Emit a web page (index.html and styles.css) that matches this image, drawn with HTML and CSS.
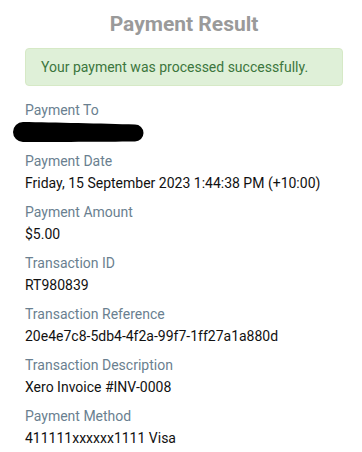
FILE: index.html
```html
<!DOCTYPE html>
<html>
<head>
<meta charset="utf-8">
<link rel="stylesheet" href="styles.css">
</head>
<body>
<div class="page">
  <h1 class="title">Payment Result</h1>
  <div class="alert">Your payment was processed successfully.</div>
  <dl class="details">
    <dt>Payment To</dt>
    <dd><svg class="redacted" width="131" height="20" viewBox="0 0 131 20"><path d="M10 0 C40 0.5 90 1.5 122 2.5 A8.5 8.5 0 0 1 122 19.5 C90 19.8 40 20 10 20 A10 10 0 0 1 10 0 Z" fill="#000"/></svg></dd>
    <dt>Payment Date</dt>
    <dd>Friday, 15 September 2023 1:44:38 PM (+10:00)</dd>
    <dt>Payment Amount</dt>
    <dd>$5.00</dd>
    <dt>Transaction ID</dt>
    <dd>RT980839</dd>
    <dt>Transaction Reference</dt>
    <dd>20e4e7c8-5db4-4f2a-99f7-1ff27a1a880d</dd>
    <dt>Transaction Description</dt>
    <dd>Xero Invoice #INV-0008</dd>
    <dt>Payment Method</dt>
    <dd>411111xxxxxx1111 Visa</dd>
  </dl>
</div>
</body>
</html>
```

FILE: styles.css
```css
html, body {
  margin: 0;
  padding: 0;
  background: #fff;
}
body {
  font-family: Roboto, "Liberation Sans", sans-serif;
  font-size: 14px;
  color: #222;
}
.page {
  padding: 10px 19px 0 25px;
}
.title {
  margin: 0;
  text-align: center;
  font-size: 21px;
  font-weight: 700;
  color: #9a9a9a;
  line-height: 28px;
}
.alert {
  margin-top: 10px;
  height: 38px;
  box-sizing: border-box;
  padding: 9px 15px;
  background: #dff0d8;
  border: 1px solid #d6e9c6;
  border-radius: 4px;
  color: #3c763d;
  line-height: 18px;
}
.details {
  margin: 14px 0 0;
}
.details dt {
  color: #6a7f90;
  line-height: 20px;
  margin: 0;
}
.details dd {
  margin: 2px 0 9px;
  line-height: 20px;
  color: #111;
}
.redacted {
  display: block;
  margin-left: -12px;
}
```
